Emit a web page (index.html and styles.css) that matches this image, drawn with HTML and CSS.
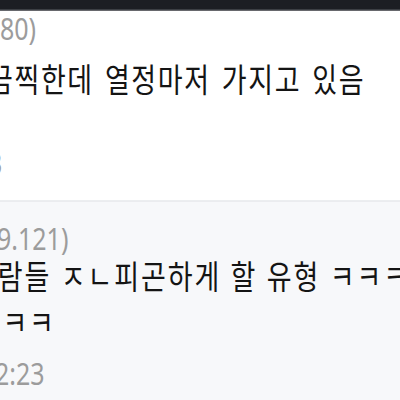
FILE: index.html
```
<!DOCTYPE html>
<html lang="ko">
<head>
    <meta charset="UTF-8">
    <meta name="viewport" content="width=device-width, initial-scale=1.0">
    <title>댓글</title>
    <link rel="stylesheet" href="styles.css">
</head>
<body>

    <div class="page">
        <div class="topbar"></div>

        <!-- 첫 번째 댓글 -->
        <div class="comment comment-first">
            <div class="meta">80)</div>
            <p class="text">끔찍한데 열정마저 가지고 있음</p>
            <div class="meta date">3</div>
        </div>

        <!-- 두 번째 댓글 -->
        <div class="comment comment-second">
            <div class="meta">9.121)</div>
            <p class="text">
                <span class="line">사람들 ㅈㄴ피곤하게 할 유형 ㅋㅋㅋㅋ</span>
                <span class="line">ㅋㅋㅋ</span>
            </p>
            <div class="meta date">2:23</div>
        </div>
    </div>

</body>
</html>
```

FILE: styles.css
```
/* 기본 변수 */
:root {
    --text-color: #141414;
    --meta-color: #9c9c9c;
    --bar-color: #1c1e23;
    --alt-bg: #f7f8fa;
    --divider: #e3e5e8;
}

* {
    margin: 0;
    padding: 0;
    box-sizing: border-box;
}

body {
    font-family: "Noto Sans", "Noto Sans CJK KR", sans-serif;
    color: var(--text-color);
    background-color: #ffffff;
    width: 400px;
    height: 400px;
    overflow: hidden;
}

/* 캡처 비율 보정 */
.page {
    transform: scaleY(1.2);
    transform-origin: top left;
}

.topbar {
    height: 7.5px;
    background-color: var(--bar-color);
    border-bottom: 1px solid #6f7175;
    box-sizing: content-box;
}

.comment {
    padding-top: 2.5px;
    padding-bottom: 19.5px;
    white-space: nowrap;
    overflow: hidden;
}

.meta {
    font-size: 25px;
    line-height: 24px;
    color: var(--meta-color);
}

.text {
    font-family: "Noto Sans CJK KR", sans-serif;
    font-size: 27px;
    line-height: 30px;
    letter-spacing: 1.6px;
    word-spacing: 2px;
    margin-top: 15.5px;
}

.date {
    margin-top: 43px;
}

/* 첫 번째 댓글 */
.comment-first .text {
    margin-left: -12px;
}

.comment-first .date {
    margin-left: -12px;
}

/* 두 번째 댓글 */
.comment-second {
    background-color: var(--alt-bg);
    border-top: 1px solid var(--divider);
    padding-top: 17.5px;
    height: 168px;
}

.comment-second .meta {
    margin-left: -3px;
}

.comment-second .text {
    margin-left: -24px;
    margin-top: 1px;
    line-height: 38.75px;
    word-spacing: 0;
}

.comment-second .line {
    display: block;
}

.comment-second .line:first-child {
    margin-left: -5px;
    letter-spacing: 1.9px;
}

.comment-second .date {
    margin-top: 11px;
    margin-left: -5px;
}
```
